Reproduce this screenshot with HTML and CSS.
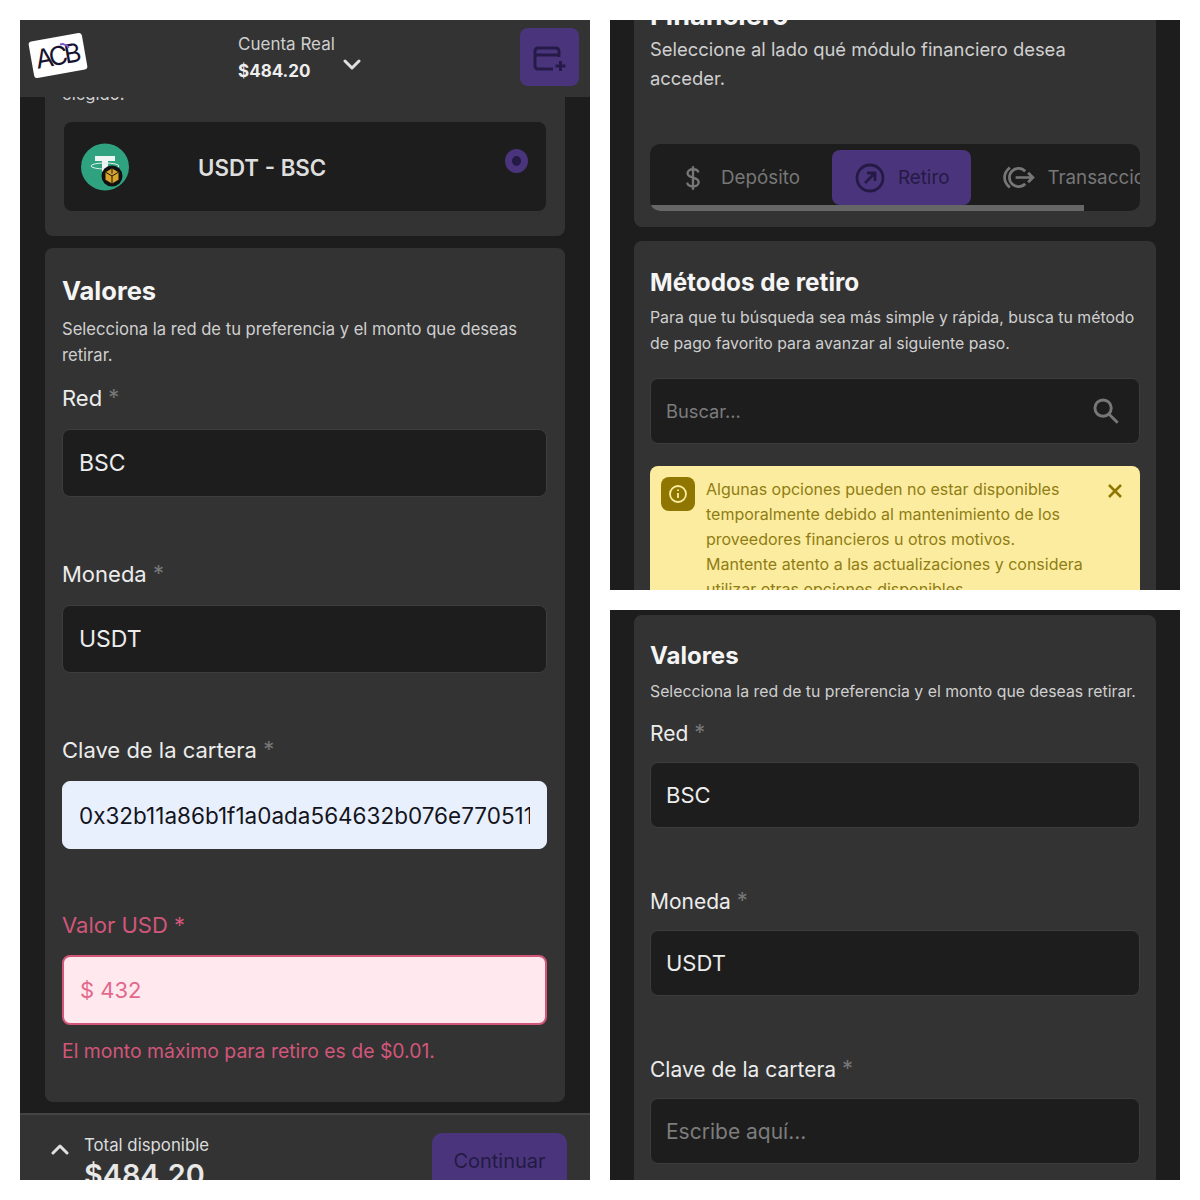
FILE: index.html
```html
<!DOCTYPE html>
<html lang="en">
<head>
    <meta charset="UTF-8">
    <meta name="viewport" content="width=device-width, initial-scale=1.0">
    <title>Retiro</title>
    <link rel="stylesheet" href="styles.css">
</head>
<body>

    <div class="collage">

        <!-- Left: withdrawal form with error -->
        <section class="phone phone-left">
            <header class="topbar">
                <div class="logo"><span class="logo-arc"></span><span class="logo-text">ACB</span></div>
                <div class="account">
                    <p class="account-name">Cuenta Real</p>
                    <p class="account-value">$484.20</p>
                </div>
                <svg class="account-chevron" viewBox="0 0 18 12"><path d="M2 2l7 7 7-7"/></svg>
                <button class="wallet-btn">
                    <svg viewBox="0 0 34 28"><path d="M26 12V6a3 3 0 0 0-3-3H5a3 3 0 0 0-3 3v15a3 3 0 0 0 3 3h15M2 10h24M27.500 16v10M22.500 21h10"/></svg>
                </button>
            </header>

            <div class="scroll-left">
                <div class="card card-method">
                    <p class="card-text">elegido.</p>
                    <div class="method">
                        <svg class="coin" viewBox="0 0 48 48">
                            <ellipse cx="24" cy="24" rx="24" ry="23.500" fill="#2fa27f"/>
                            <path d="M14 13h20v5h-7v11h-6V18h-7z" fill="#eef5f2"/>
                            <ellipse cx="24" cy="23" rx="14" ry="3" fill="none" stroke="#dff0ea" stroke-width="1"/>
                            <circle cx="31" cy="33" r="10.500" fill="#111"/>
                            <path d="M31 25.500l6.500 3.700v7.600L31 40.500l-6.500-3.700v-7.600z" fill="#d9a32c"/>
                            <path d="M31 25.500v5M24.500 29.200l6.500 3.800 6.500-3.800M31 33v7.500" fill="none" stroke="#111" stroke-width="1"/>
                        </svg>
                        <span class="method-name">USDT - BSC</span>
                        <span class="radio"></span>
                    </div>
                </div>

                <div class="card card-values">
                    <h2>Valores</h2>
                    <p class="card-text">Selecciona la red de tu preferencia y el monto que deseas retirar.</p>
                    <div class="field">
                        <label>Red <span class="req">*</span></label>
                        <input type="text" value="BSC" readonly>
                    </div>
                    <div class="field">
                        <label>Moneda <span class="req">*</span></label>
                        <input type="text" value="USDT" readonly>
                    </div>
                    <div class="field">
                        <label>Clave de la cartera <span class="req">*</span></label>
                        <input type="text" class="input-filled" value="0x32b11a86b1f1a0ada564632b076e7705118e2a1f" readonly>
                    </div>
                    <div class="field field-error">
                        <label>Valor USD <span class="req">*</span></label>
                        <input type="text" value="$ 432" readonly>
                        <p class="error-msg">El monto máximo para retiro es de $0.01.</p>
                    </div>
                </div>
            </div>

            <footer class="bottombar">
                <svg class="total-chevron" viewBox="0 0 18 12"><path d="M2 10l7-7 7 7"/></svg>
                <div class="total">
                    <p class="total-label">Total disponible</p>
                    <p class="total-value">$484.20</p>
                </div>
                <button class="continue-btn">Continuar</button>
            </footer>
        </section>

        <!-- Top right: withdrawal methods -->
        <section class="phone phone-methods">
            <div class="card card-finance">
                <h2>Financiero</h2>
                <p class="card-text">Seleccione al lado qué módulo financiero desea acceder.</p>
                <div class="tabs">
                    <div class="tabs-row">
                        <div class="tab tab-deposit">
                            <svg viewBox="0 0 24 32"><path d="M18.500 9.500c-.5-2.700-3-4-6.500-4-3.800 0-6.500 1.900-6.500 4.800 0 2.800 2.100 4 6.500 5.200 4.600 1.200 6.800 2.500 6.800 5.500 0 3-2.900 5-6.800 5-3.800 0-6.500-1.600-7-4.500M12 2v28"/></svg>
                            <span>Depósito</span>
                        </div>
                        <div class="tab tab-active">
                            <svg viewBox="0 0 32 32"><circle cx="16" cy="16" r="13"/><path d="M11 21L21 11M13 11h8v8"/></svg>
                            <span>Retiro</span>
                        </div>
                        <div class="tab tab-transfer">
                            <svg viewBox="0 0 34 26"><path d="M8 2.500C4.500 5.500 2.500 9 2.500 13S4.500 20.500 8 23.500"/><path d="M24 6.500A9.500 9.500 0 1 0 24 19.500M14 13h18M27 8l5 5-5 5"/></svg>
                            <span>Transacciones</span>
                        </div>
                    </div>
                    <div class="tabs-bar"></div>
                </div>
            </div>

            <div class="card card-search">
                <h2>Métodos de retiro</h2>
                <p class="card-text">Para que tu búsqueda sea más simple y rápida, busca tu método de pago favorito para avanzar al siguiente paso.</p>
                <div class="search-box">
                    <input type="text" placeholder="Buscar...">
                    <svg viewBox="0 0 24 24"><circle cx="9.500" cy="9.500" r="7"/><path d="M14.500 14.500L22 22"/></svg>
                </div>
                <div class="alert">
                    <div class="alert-icon">
                        <svg viewBox="0 0 20 20"><circle cx="10" cy="10" r="8"/><path d="M10 9v5M10 5.500v1.500"/></svg>
                    </div>
                    <p>Algunas opciones pueden no estar disponibles temporalmente debido al mantenimiento de los proveedores financieros u otros motivos.<br>Mantente atento a las actualizaciones y considera utilizar otras opciones disponibles.</p>
                    <svg class="alert-close" viewBox="0 0 16 16"><path d="M2 2l12 12M14 2L2 14"/></svg>
                </div>
            </div>
        </section>

        <!-- Bottom right: empty form -->
        <section class="phone phone-empty">
            <div class="card card-values">
                <h2>Valores</h2>
                <p class="card-text">Selecciona la red de tu preferencia y el monto que deseas retirar.</p>
                <div class="field">
                    <label>Red <span class="req">*</span></label>
                    <input type="text" value="BSC" readonly>
                </div>
                <div class="field">
                    <label>Moneda <span class="req">*</span></label>
                    <input type="text" value="USDT" readonly>
                </div>
                <div class="field">
                    <label>Clave de la cartera <span class="req">*</span></label>
                    <input type="text" placeholder="Escribe aquí...">
                </div>
            </div>
        </section>

    </div>

</body>
</html>
```

FILE: styles.css
```css
* {
    box-sizing: border-box;
}

body {
    margin: 0;
    background-color: #fff;
    font-family: Inter, "Liberation Sans", sans-serif;
    color: #e6e6e6;
}

p,
h2 {
    margin: 0;
}

.collage {
    display: grid;
    grid-template-columns: 570px 570px;
    grid-template-rows: 570px 570px;
    gap: 20px;
    padding: 20px;
}

.phone {
    overflow: hidden;
    background-color: #1d1d1d;
}

.phone-left {
    grid-row: 1 / 3;
    display: flex;
    flex-direction: column;
}

.card {
    background-color: #333;
    border-radius: 8px;
}

.card h2 {
    color: #f5f5f5;
    font-weight: 700;
}

.card-text {
    color: #cfcfcf;
}

/* Top bar */
.topbar {
    height: 77px;
    flex-shrink: 0;
    display: flex;
    align-items: flex-start;
    background-color: #333;
    padding: 8px 11px 0;
}

.logo {
    position: relative;
    flex-shrink: 0;
    width: 54px;
    height: 37px;
    margin-top: 9px;
    background-color: #fff;
    border-radius: 3px;
    transform: rotate(-10deg);
    text-align: center;
    text-indent: -3px;
}

.logo-text {
    font-size: 26px;
    font-weight: 400;
    line-height: 38px;
    letter-spacing: -3.500px;
    color: #17132e;
}

.logo-arc {
    position: absolute;
    left: 25px;
    top: 7px;
    width: 15px;
    height: 15px;
    border: 2px solid transparent;
    border-top-color: #7a58d0;
    border-radius: 50%;
    transform: rotate(30deg);
    z-index: 1;
}

.account {
    margin-left: 153px;
    padding-top: 4px;
}

.account-name {
    font-size: 17px;
    line-height: 24px;
    color: #cfcfcf;
}

.account-value {
    margin-top: 3px;
    font-size: 17px;
    font-weight: 700;
    line-height: 24px;
    color: #eee;
}

.account-chevron {
    width: 18px;
    height: 12px;
    margin: 31px 0 0 8px;
}

.account-chevron path,
.total-chevron path {
    fill: none;
    stroke: #e0e0e0;
    stroke-width: 3;
    stroke-linecap: round;
    stroke-linejoin: round;
}

.wallet-btn {
    width: 59px;
    height: 58px;
    margin-left: auto;
    margin-right: 0;
    padding: 0;
    border: 0;
    border-radius: 8px;
    background-color: #4a357c;
}

.wallet-btn svg {
    display: block;
    width: 34px;
    height: 28px;
    margin: 3px auto 0;
}

.wallet-btn path {
    fill: none;
    stroke: #251a48;
    stroke-width: 3;
}

/* Left scroll area */
.scroll-left {
    flex: 1;
    min-height: 0;
    overflow: hidden;
    padding: 0 25px;
}

.card-method {
    margin-top: -16px;
    padding: 0 19px 25px;
}

.card-method .card-text {
    margin-left: -2px;
    font-size: 16.600px;
    line-height: 26px;
}

.method {
    display: flex;
    align-items: center;
    height: 89px;
    margin-top: 15px;
    padding-left: 17px;
    background-color: #1d1d1d;
    border-radius: 8px;
}

.coin {
    width: 48px;
    height: 48px;
}

.method-name {
    margin-left: 69px;
    padding-top: 2px;
    font-size: 22.300px;
    font-weight: 600;
    color: #dedede;
}

.radio {
    width: 23px;
    height: 24px;
    margin: -12px 18px 0 auto;
    border: 7px solid #4a357c;
    border-radius: 50%;
    background-color: #241a45;
}

.card-values {
    margin-top: 12px;
    padding: 26px 18px 38px 17px;
}

.card-values h2 {
    font-size: 25.500px;
    line-height: 34px;
}

.card-values > .card-text {
    margin-top: 8px;
    font-size: 16.600px;
    line-height: 26px;
}

/* Form fields */
.field {
    margin-top: 63px;
}

.card-text + .field {
    margin-top: 16px;
}

.field label {
    display: block;
    margin-bottom: 17px;
    font-size: 22px;
    line-height: 28px;
    color: #ececec;
}

.req {
    position: relative;
    top: -1px;
    font-size: 22px;
    line-height: 0;
    color: #777;
}

.field input {
    display: block;
    width: 100%;
    height: 68px;
    padding: 0 16px;
    border: 1px solid #3d3d3d;
    border-radius: 8px;
    outline: none;
    background-color: #1d1d1d;
    font-family: inherit;
    font-size: 23px;
    color: #ececec;
}

.field input::placeholder {
    color: #7c7c7c;
}

.field .input-filled {
    border-color: #e8f0fd;
    background-color: #e8f0fd;
    font-size: 22.500px;
    color: #14141c;
}

.field-error {
    margin-top: 62px;
}

.field-error label {
    margin-bottom: 16px;
    color: #d1567a;
}

.field-error .req {
    top: 0;
    color: #d1567a;
}

.field-error input {
    height: 70px;
    border: 2px solid #d1567a;
    background-color: #ffe9ee;
    font-size: 22px;
    color: #e2688c;
}

.error-msg {
    margin-top: 13px;
    font-size: 19.400px;
    line-height: 26px;
    color: #d1567a;
}

/* Bottom bar */
.bottombar {
    height: 67px;
    flex-shrink: 0;
    display: flex;
    overflow: hidden;
    background-color: #333;
    border-top: 2px solid #444;
    padding: 17px 23px 0 31px;
}

.total-chevron {
    width: 18px;
    height: 12px;
    margin-top: 11px;
}

.total {
    margin-left: 15px;
    margin-top: 1px;
}

.total-label {
    font-size: 16.800px;
    line-height: 24px;
    color: #dcdcdc;
}

.total-value {
    font-size: 28.800px;
    font-weight: 600;
    line-height: 36px;
    color: #e8e8e8;
}

.continue-btn {
    width: 135px;
    height: 70px;
    margin-left: auto;
    padding: 0 0 14px;
    margin-top: 1px;
    border: 0;
    border-radius: 10px;
    background-color: #4a357c;
    font-family: inherit;
    font-size: 20px;
    color: #241a45;
}

/* Finance card */
.card-finance,
.card-search,
.phone-empty .card-values {
    margin: 0 24px;
    padding-left: 16px;
    padding-right: 16px;
}

.card-finance {
    padding-bottom: 16px;
    border-radius: 0 0 8px 8px;
}

.card-finance h2 {
    margin-top: -20px;
    font-size: 27px;
    line-height: 32px;
}

.card-finance .card-text {
    margin-top: 3px;
    font-size: 18.400px;
    line-height: 29px;
}

.tabs {
    margin-top: 51px;
    padding-top: 6px;
    overflow: hidden;
    background-color: #1d1d1d;
    border-radius: 10px;
}

.tabs-row {
    display: flex;
    height: 55px;
    white-space: nowrap;
}

.tab {
    display: flex;
    align-items: center;
    flex-shrink: 0;
    font-size: 18.800px;
    color: #777;
}

.tab svg {
    fill: none;
    stroke: #777;
    stroke-width: 2.800;
}

.tab-deposit {
    padding-left: 33px;
    padding-right: 32px;
    gap: 18px;
}

.tab-deposit svg {
    width: 20px;
    height: 28px;
}

.tab-active {
    padding: 0 22px 0 22px;
    gap: 12px;
    background-color: #4a357c;
    border-radius: 8px;
    color: #241a45;
}

.tab-active svg {
    width: 32px;
    height: 32px;
    stroke: #241a45;
}

.tab-transfer {
    padding-left: 31px;
    gap: 12px;
}

.tab-transfer svg {
    width: 33px;
    height: 25px;
}

.tabs-bar {
    width: 434px;
    height: 6px;
    background-color: #666;
}

/* Search card */
.card-search {
    margin-top: 14px;
    padding-top: 25px;
    padding-bottom: 40px;
    border-radius: 8px 8px 0 0;
}

.card-search h2 {
    font-size: 24.300px;
    line-height: 32px;
}

.card-search .card-text {
    margin-top: 7px;
    font-size: 15.850px;
    line-height: 25.500px;
}

.search-box {
    display: flex;
    align-items: center;
    height: 66px;
    margin-top: 22px;
    padding: 0 19px 0 15px;
    background-color: #1d1d1d;
    border: 1px solid #3d3d3d;
    border-radius: 8px;
}

.search-box input {
    flex: 1;
    min-width: 0;
    padding: 0;
    border: 0;
    outline: none;
    background: transparent;
    font-family: inherit;
    font-size: 18.300px;
}

.search-box input::placeholder {
    color: #7c7c7c;
}

.search-box svg {
    width: 28px;
    height: 28px;
    fill: none;
    stroke: #777;
    stroke-width: 2.500;
}

.alert {
    display: flex;
    align-items: flex-start;
    margin-top: 22px;
    padding: 11px 17px 12px 11px;
    background-color: #fcec9f;
    border-radius: 8px;
}

.alert-icon {
    flex-shrink: 0;
    display: flex;
    align-items: center;
    justify-content: center;
    width: 34px;
    height: 34px;
    background-color: #8f7600;
    border-radius: 8px;
}

.alert-icon svg {
    width: 20px;
    height: 20px;
    fill: none;
    stroke: #fcec9f;
    stroke-width: 1.800;
}

.alert p {
    flex: 1;
    margin-left: 11px;
    font-size: 16px;
    line-height: 25px;
    color: #8f7d14;
}

.alert-close {
    flex-shrink: 0;
    width: 16px;
    height: 16px;
    margin: 6px 0 0 14px;
    fill: none;
    stroke: #8f7600;
    stroke-width: 2.500;
}

/* Bottom right form */
.phone-empty .card-values {
    margin-top: 5px;
    padding-top: 25px;
}

.phone-empty .card-values h2 {
    font-size: 24px;
    line-height: 32px;
}

.phone-empty .card-values > .card-text {
    margin-top: 8px;
    font-size: 15.800px;
    line-height: 24px;
    white-space: nowrap;
}

.phone-empty .field {
    margin-top: 60px;
}

.phone-empty .card-text + .field {
    margin-top: 16px;
}

.phone-empty .field label {
    margin-bottom: 14px;
    font-size: 21px;
}

.phone-empty .field input {
    height: 66px;
    padding: 0 15px;
    font-size: 22px;
}

.phone-empty .field input::placeholder {
    font-size: 21px;
}
```
